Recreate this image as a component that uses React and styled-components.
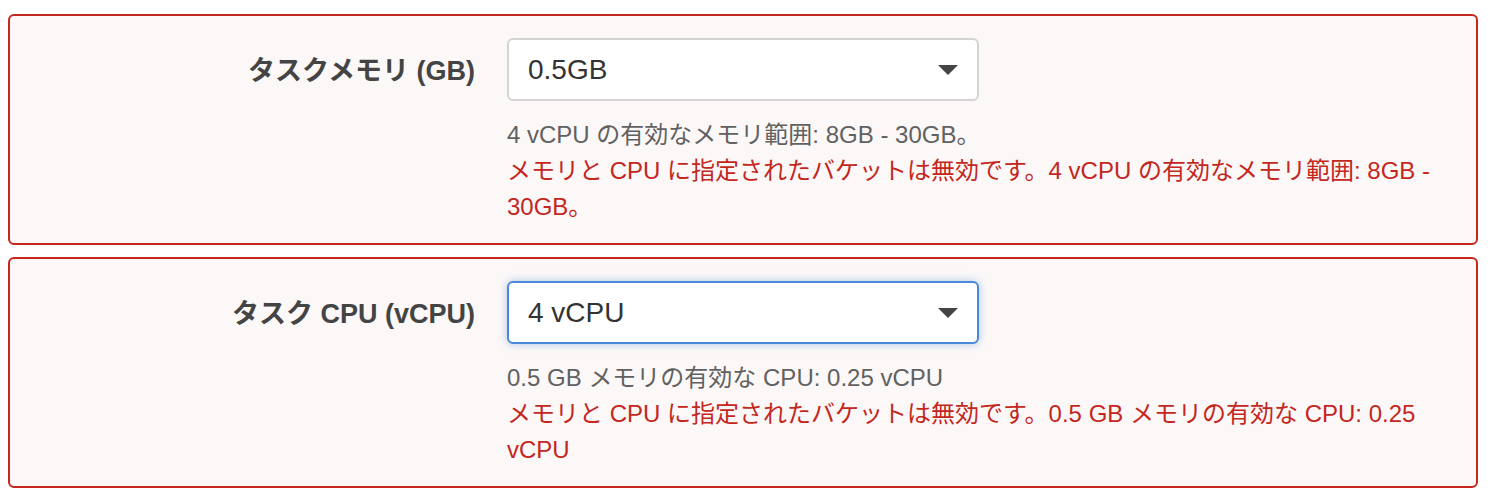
import React from "react";
import styled, { createGlobalStyle, css } from "styled-components";

const GlobalStyle = createGlobalStyle`
  body {
    margin: 0;
    background: #ffffff;
    font-family: "Liberation Sans", "Noto Sans CJK JP", sans-serif;
  }
`;

const Page = styled.div`
  display: flex;
  flex-direction: column;
  gap: 12px;
  padding: 14px 14px 0 8px;
`;

const FieldBox = styled.div`
  display: flex;
  gap: 32px;
  border: 2px solid #c3271e;
  border-radius: 6px;
  background: #fcf8f8;
  padding: 22px 0 18px 0;
`;

const Label = styled.label`
  flex: 0 0 465px;
  text-align: right;
  font-size: 27px;
  font-weight: 700;
  color: #444444;
  line-height: 66px;
`;

const Control = styled.div`
  flex: 0 1 940px;
  display: flex;
  flex-direction: column;
`;

const Select = styled.div`
  width: 472px;
  height: 63px;
  box-sizing: border-box;
  display: flex;
  align-items: center;
  justify-content: space-between;
  padding: 0 19px 0 19px;
  background: #ffffff;
  border: 2px solid #d4d4d4;
  border-radius: 6px;
  font-size: 28px;
  color: #333333;
  ${(p) =>
    p.$focused &&
    css`
      border-color: #4a88d8;
      box-shadow: 0 0 8px rgba(74, 136, 216, 0.45);
    `}
`;

const Caret = styled.svg`
  width: 20px;
  height: 10px;
  fill: #444444;
`;

const Help = styled.div`
  margin-top: 16px;
  font-size: 24px;
  line-height: 36px;
`;

const Hint = styled.div`
  color: #616161;
`;

const Error = styled.div`
  color: #c3271e;
`;

function Field({ label, value, focused, hint, error }) {
  return (
    <FieldBox>
      <Label>{label}</Label>
      <Control>
        <Select $focused={focused}>
          <span>{value}</span>
          <Caret viewBox="0 0 20 10">
            <path d="M0 0h20L10 10z" />
          </Caret>
        </Select>
        <Help>
          <Hint>{hint}</Hint>
          <Error>{error}</Error>
        </Help>
      </Control>
    </FieldBox>
  );
}

export default function App() {
  return (
    <>
      <GlobalStyle />
      <Page>
        <Field
          label="タスクメモリ (GB)"
          value="0.5GB"
          hint="4 vCPU の有効なメモリ範囲: 8GB - 30GB。"
          error="メモリと CPU に指定されたバケットは無効です。4 vCPU の有効なメモリ範囲: 8GB - 30GB。"
        />
        <Field
          label="タスク CPU (vCPU)"
          value="4 vCPU"
          focused
          hint="0.5 GB メモリの有効な CPU: 0.25 vCPU"
          error="メモリと CPU に指定されたバケットは無効です。0.5 GB メモリの有効な CPU: 0.25 vCPU"
        />
      </Page>
    </>
  );
}
